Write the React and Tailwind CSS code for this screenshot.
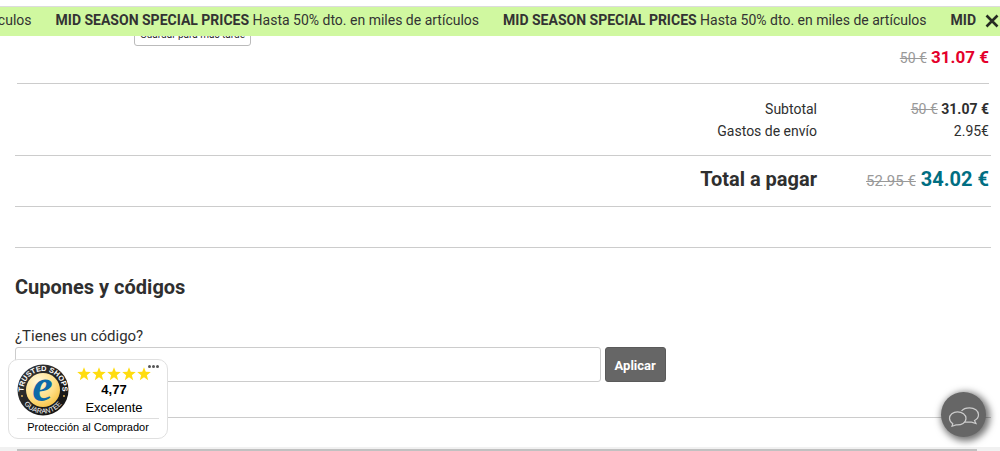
import React from "react";

const STAR = "M12 0.500l3 7.800 8.600.4-6.700 5.300 2.300 8.500-7.200-4.800-7.200 4.800 2.300-8.500-6.700-5.300 8.600-.4z";

function PromoBanner() {
  return (
    <div className="mt-1.5 flex h-[30px] items-center border-t border-[#dcdcdc] bg-[#d0f8a0] text-sm text-[#333]">
      <div className="min-w-0 flex-1 overflow-hidden pb-[3px]">
        <div className="-ml-[392px] flex gap-6 whitespace-nowrap">
          {[0, 1, 2, 3].map((i) => (
            <p key={i} className="shrink-0">
              <strong className="font-bold">MID SEASON SPECIAL PRICES</strong> Hasta 50% dto. en miles de artículos
            </p>
          ))}
        </div>
      </div>
      <button type="button" aria-label="Cerrar" className="flex h-full w-[23px] items-center pb-0.5 pl-2">
        <svg viewBox="0 0 14 14" className="h-3.5 w-3.5 shrink-0" fill="none" stroke="#262b22" strokeWidth="2.6">
          <path d="M1.5 1.5l11 11M12.5 1.5l-11 11" />
        </svg>
      </button>
    </div>
  );
}

function Summary() {
  return (
    <div className="border-b border-[#ccc]">
      <dl className="mx-0.5 grid grid-cols-[1fr_172px] pt-3.5 pb-[13px] text-right text-sm leading-[22px]">
        <dt>Subtotal</dt>
        <dd><s className="text-[#999]">50 €</s> <b>31.07 €</b></dd>
        <dt>Gastos de envío</dt>
        <dd>2.95€</dd>
      </dl>
      <dl className="grid h-[51px] grid-cols-[1fr_172px] items-baseline border-t border-[#ccc] px-0.5 pt-2 text-right text-xl leading-[30px] font-bold">
        <dt>Total a pagar</dt>
        <dd className="text-[#006e82]"><s className="text-[15px] font-normal text-[#999]">52.95 €</s> 34.02 €</dd>
      </dl>
    </div>
  );
}

function Coupons() {
  return (
    <section className="mt-10 border-y border-[#ccc] pt-6 pb-[35px]">
      <h2 className="text-xl leading-[30px] font-bold">Cupones y códigos</h2>
      <form className="mt-[23px]" onSubmit={(e) => e.preventDefault()}>
        <label htmlFor="codigo" className="block text-[15px] leading-[22px]">¿Tienes un código?</label>
        <div className="flex gap-1">
          <input id="codigo" type="text" className="h-[35px] w-3/5 rounded-[3px] border border-[#ccc] bg-white px-2 text-sm" />
          <button type="submit" className="h-[35px] rounded-[3px] border border-[#5a5a5a] bg-[#666] px-[9px] pt-0.5 text-[13px] font-bold text-white">Aplicar</button>
        </div>
      </form>
    </section>
  );
}

function TrustSeal() {
  return (
    <svg viewBox="0 0 52 52" className="h-[52px] w-[52px]" role="img" aria-label="Trusted Shops Guarantee">
      <defs>
        <radialGradient id="gold" cx="35%" cy="25%" r="85%">
          <stop offset="0" stopColor="#fff6d8" />
          <stop offset="0.6" stopColor="#ffdf86" />
          <stop offset="1" stopColor="#f5bd3c" />
        </radialGradient>
        <linearGradient id="ring" x1="0" y1="0" x2="1" y2="1">
          <stop offset="0" stopColor="#3c3c3c" />
          <stop offset="0.5" stopColor="#222" />
          <stop offset="1" stopColor="#111" />
        </linearGradient>
        <path id="arcTop" d="M7 31a19.500 19.500 0 1 1 38 0" />
        <path id="arcBottom" d="M2.500 26a23.500 23.500 0 0 0 47 0" />
      </defs>
      <circle cx="26" cy="26" r="25.500" fill="url(#ring)" />
      <circle cx="26" cy="26" r="17" fill="url(#gold)" />
      <g fill="#fff" fontFamily="Liberation Sans, sans-serif" fontWeight="700" fontSize="7.400" textAnchor="middle">
        <text><textPath href="#arcTop" startOffset="50%">TRUSTED SHOPS</textPath></text>
        <text fontSize="7" fontWeight="400"><textPath href="#arcBottom" startOffset="50%">GUARANTEE</textPath></text>
      </g>
      <circle cx="5" cy="32" r="0.900" fill="#f0c060" />
      <circle cx="47" cy="32" r="0.900" fill="#f0c060" />
      <text x="25.500" y="36.500" textAnchor="middle" fill="#0d6aa8" fontFamily="Liberation Serif, serif" fontStyle="italic" fontWeight="700" fontSize="46">e</text>
    </svg>
  );
}

function TrustBadge() {
  return (
    <aside className="absolute bottom-3 left-2 w-40 rounded-[10px] border border-[#e0e0e0] bg-white px-2 pt-1 pb-0.5 font-['Liberation_Sans',Arial,sans-serif] text-black">
      <button type="button" aria-label="Más opciones" className="absolute top-[5px] right-2 flex gap-px">
        {[0, 1, 2].map((i) => <span key={i} className="h-[3px] w-[3px] rounded-full bg-[#555]" />)}
      </button>
      <div className="flex gap-2 border-b border-[#ddd] pb-px">
        <TrustSeal />
        <div className="w-[74px] pt-[3px] text-center">
          <div className="flex gap-px" role="img" aria-label="4,77 de 5">
            {[0, 1, 2, 3, 4].map((i) => (
              <svg key={i} viewBox="0 0 24 24" className="h-3.5 w-3.5 shrink-0" fill="#ffdc0f"><path d={STAR} /></svg>
            ))}
          </div>
          <p className="text-[13px] leading-[18px] font-bold">4,77</p>
          <p className="text-[13px] leading-[18px]">Excelente</p>
        </div>
      </div>
      <p className="text-center text-[11px] leading-[17px] whitespace-nowrap">Protección al Comprador</p>
    </aside>
  );
}

function ChatButton() {
  return (
    <button type="button" aria-label="Chat" className="absolute right-3.5 bottom-3.5 flex h-[45px] w-[45px] items-center justify-center rounded-full bg-[#666] shadow-[2px_2px_7px_2px_rgba(0,0,0,0.55)]">
      <svg viewBox="0 0 32 20" className="mt-1 h-5 w-8" fill="none" stroke="#ccc" strokeWidth="1.200">
        <path d="M13.500 4C15 2 18 .8 21.500 .8c5 0 9 3 9 7 0 2.500-1.500 4.500-4 5.700l1.500 3-4.500-1.300-7 0" />
        <path d="M9.500 4.800c-4.500 0-8 3-8 6.500 0 2.300 1.300 4.200 3.300 5.400L4 19.200l4-1.300c5.500 .5 10-2.300 10-6.600 0-3.500-3.800-6.500-8.500-6.500z" />
      </svg>
    </button>
  );
}

export default function App() {
  return (
    <div className="relative overflow-hidden bg-white font-[Roboto,sans-serif] text-[#2f2f2f]">
      <PromoBanner />
      <main className="pr-[9px] pb-[29px] pl-[15px]">
        <div className="mx-0.5 flex h-12 items-start justify-between overflow-hidden border-b border-[#ccc]">
          <button type="button" className="-mt-4 ml-[117px] h-[26px] w-[117px] rounded-[3px] border border-[#bbb] pt-1 text-[10px] leading-5 whitespace-nowrap">Guardar para más tarde</button>
          <p className="pt-2.5 text-[17px] leading-[22px]">
            <s className="text-sm text-[#999]">50 €</s> <b className="text-[#e4002b]">31.07 €</b>
          </p>
        </div>
        <Summary />
        <Coupons />
      </main>
      <div className="h-1 bg-[#f1f1f1] pt-0.5 pr-[23px] pl-[17px]">
        <div className="h-0.5 bg-[#c1c1c1]" />
      </div>
      <TrustBadge />
      <ChatButton />
    </div>
  );
}
